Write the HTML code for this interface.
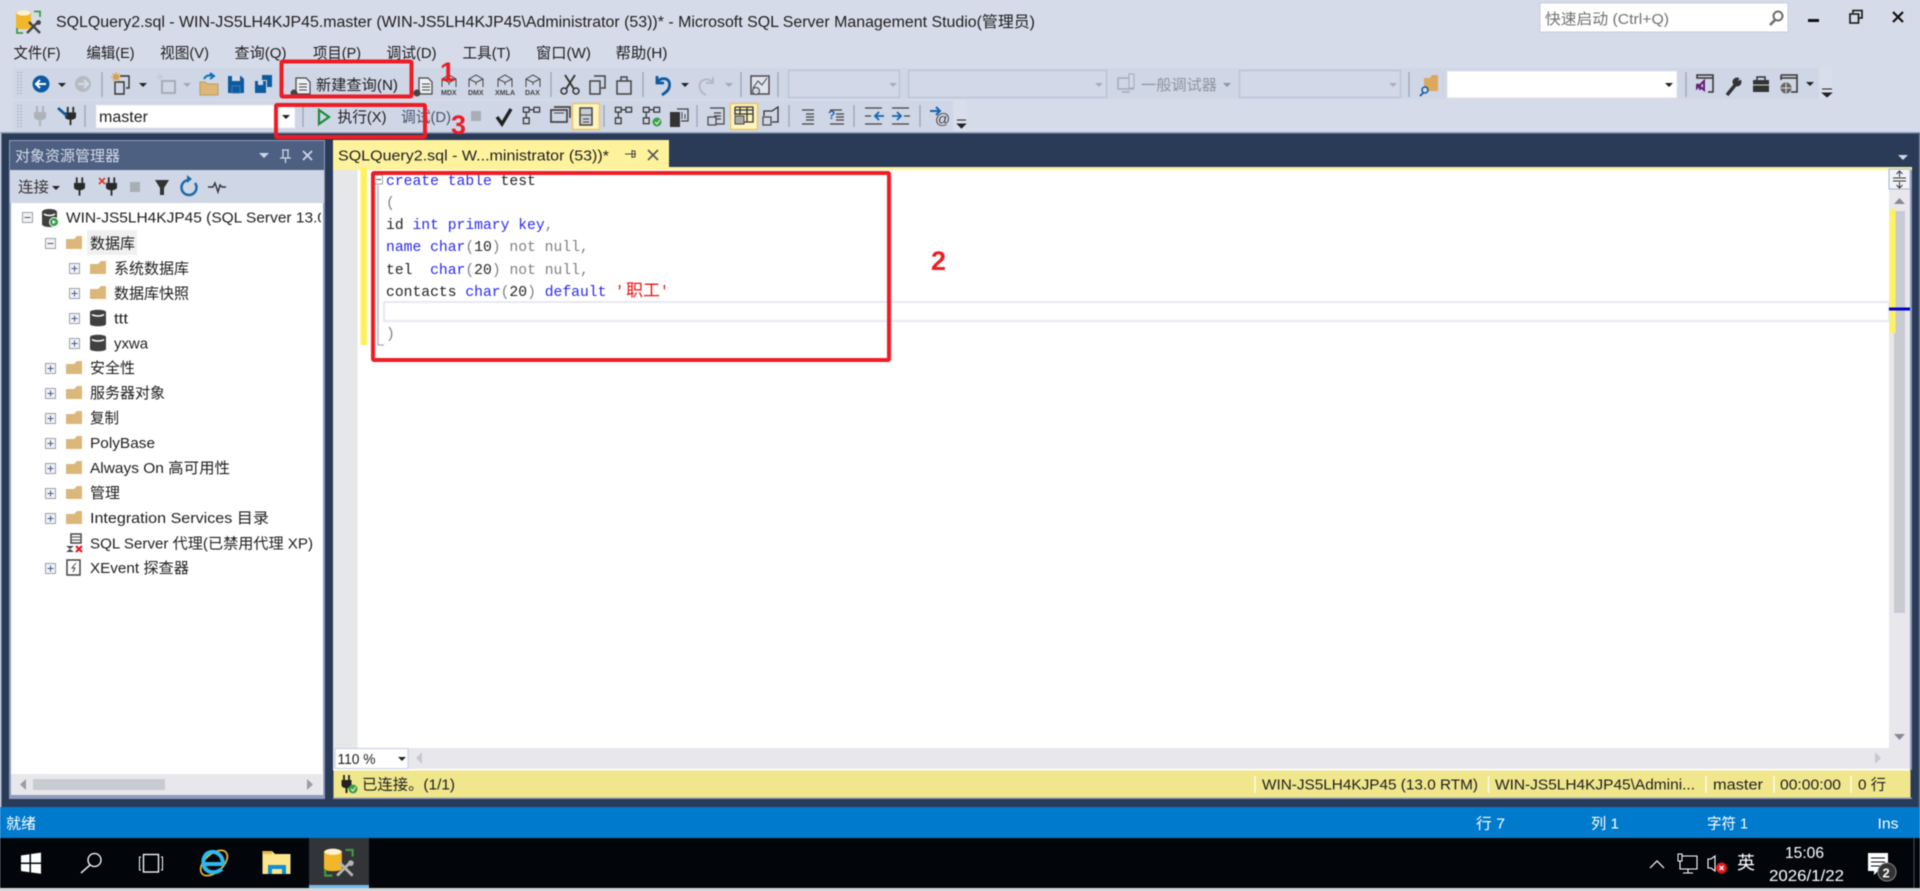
<!DOCTYPE html>
<html><head><meta charset="utf-8"><title>SSMS</title>
<style>
html,body{margin:0;padding:0;width:1920px;height:891px;overflow:hidden;background:#d6dbe9}
svg{display:block;filter:blur(.4px)}
text{font-family:"Liberation Sans","Noto Sans CJK SC",sans-serif;font-size:15px;fill:#1e1e1e;white-space:pre}
.m{font-family:"Liberation Mono","Noto Sans CJK SC",monospace;font-size:14.7px}
.w{fill:#fff}.t{font-size:7px;font-weight:bold;fill:#444}
.n{font-weight:bold;font-size:27px;fill:#ee1c25}
.b{fill:#2a2af0}.g{fill:#808080}.k{fill:#222}
</style></head><body>
<svg xmlns="http://www.w3.org/2000/svg" width="1920" height="891" viewBox="0 0 1920 891">
<defs>
<clipPath id="srv"><rect x="60" y="205" width="261" height="30"/></clipPath>
<symbol id="fo" viewBox="0 0 16 13"><path d="M0 3H8L11 0H16V13H0Z" fill="#dcb77a"/></symbol>
<symbol id="pl" viewBox="0 0 11 11"><rect x=".5" y=".5" width="10" height="10" fill="#f2f2f4" stroke="#9ba0ac"/><path d="M2.5 5.5H8.500M5.500 2.500V8.500" stroke="#3d5a94" stroke-width="1"/></symbol>
<symbol id="mi" viewBox="0 0 11 11"><rect x=".5" y=".5" width="10" height="10" fill="#f2f2f4" stroke="#9ba0ac"/><path d="M2.500 5.500H8.500" stroke="#555" stroke-width="1"/></symbol>
<symbol id="db" viewBox="0 0 16 18"><path d="M0 3C0 0 16 0 16 3V15C16 18 0 18 0 15Z" fill="#404040"/><path d="M2 5.500C5 7.500 11 7.500 14 5.500" stroke="#fff" stroke-width="1.600" fill="none"/></symbol>
<symbol id="ssms" viewBox="0 0 26 24"><path d="M0 3C0 0 15 0 15 3V17C15 20 0 20 0 17Z" fill="#f2b62b"/><ellipse cx="7.500" cy="3" rx="7" ry="2.600" fill="#fdf3cf"/><path d="M18 1.500H24V7M1 18V23H7" stroke="#3e9a46" stroke-width="1.800" fill="none"/><path d="M11 23L22 12M13 12L24 23" stroke="currentColor" stroke-width="2.400" fill="none"/><circle cx="22.500" cy="12.500" r="2.400" fill="currentColor"/></symbol>
<symbol id="cube" viewBox="0 0 18 14"><path d="M2 13V5L9 1L16 5V13M2 5L9 8.500L16 5M9 8.500V11" stroke="#444" fill="none"/></symbol>
<symbol id="plug" viewBox="0 0 12 20"><path d="M3 0V6M9 0V6" stroke="currentColor" stroke-width="2"/><path d="M0 6H12V11C12 13 9 14 7 14V20H5V14C3 14 0 13 0 11Z" fill="currentColor"/></symbol>
<symbol id="tree" viewBox="0 0 20 20"><path d="M1.500 1.500h6v5h-6zM12.500 1.500h6v5h-6zM1.500 12.500h6v6h-6zM4.500 6.500v6M7.500 4H12.500" stroke="#333" stroke-width="1.300" fill="none"/></symbol>
</defs>

<!-- window -->
<rect width="1920" height="891" fill="#d6dbe9"/>
<use href="#ssms" x="16" y="10" width="26" height="24" color="#444"/>
<text x="56" y="27" style="font-size:15.500px" textLength="979" lengthAdjust="spacingAndGlyphs">SQLQuery2.sql - WIN-JS5LH4KJP45.master (WIN-JS5LH4KJP45\Administrator (53))* - Microsoft SQL Server Management Studio(管理员)</text>
<rect x="1540" y="3" width="248" height="29" fill="#fff" stroke="#c6cbdc"/>
<text x="1545" y="24" style="fill:#717171" textLength="124" lengthAdjust="spacingAndGlyphs">快速启动 (Ctrl+Q)</text>
<circle cx="1778" cy="16" r="4.500" fill="none" stroke="#6d6d6d" stroke-width="2"/><path d="M1775 20L1770 25" stroke="#6d6d6d" stroke-width="2.500"/>
<path d="M1808 20.500H1819" stroke="#111" stroke-width="3"/>
<path d="M1853 13V10.500H1862V18H1859M1850 14H1858.500V23H1850Z" stroke="#111" stroke-width="1.600" fill="none"/>
<path d="M1893 12L1903 22M1903 12L1893 22" stroke="#111" stroke-width="2.200"/>

<!-- menu -->
<g>
<text x="13.500" y="58" textLength="47" lengthAdjust="spacingAndGlyphs">文件(F)</text>
<text x="86.500" y="58" textLength="48" lengthAdjust="spacingAndGlyphs">编辑(E)</text>
<text x="160" y="58" textLength="49" lengthAdjust="spacingAndGlyphs">视图(V)</text>
<text x="234.500" y="58" textLength="52" lengthAdjust="spacingAndGlyphs">查询(Q)</text>
<text x="313" y="58" textLength="48" lengthAdjust="spacingAndGlyphs">项目(P)</text>
<text x="386.500" y="58" textLength="50" lengthAdjust="spacingAndGlyphs">调试(D)</text>
<text x="462.500" y="58" textLength="48" lengthAdjust="spacingAndGlyphs">工具(T)</text>
<text x="536" y="58" textLength="55" lengthAdjust="spacingAndGlyphs">窗口(W)</text>
<text x="615.500" y="58" textLength="52" lengthAdjust="spacingAndGlyphs">帮助(H)</text>
</g>

<!-- toolbars bg -->
<rect x="13" y="68" width="1806" height="31" fill="#cfd6e5"/>
<rect x="1819" y="68" width="13" height="31" fill="#d9deeb"/>
<rect x="13" y="101" width="940" height="30" fill="#cfd6e5"/>
<rect x="953" y="101" width="13" height="30" fill="#d9deeb"/>
<path d="M18 72V96M21 72V96M18 105V127M21 105V127" stroke="#8b95a9" stroke-dasharray="1 2"/>

<!-- toolbar 1 -->
<circle cx="41" cy="84" r="8.500" fill="#0e5a9e"/><path d="M46 84H37M40 80L36 84L40 88" stroke="#fff" stroke-width="2" fill="none"/>
<path d="M58 83H66L62 87Z" fill="#222"/>
<circle cx="83" cy="84" r="8" fill="#b6bac2"/><path d="M78 84H87M84 80L88 84L84 88" stroke="#d6dbe9" stroke-width="2" fill="none"/>
<path d="M102 72V97M643 72V97M741 72V97M778 72V97M551 72V97M1409 72V97M1686 72V97M85 105V127M303 105V127M604 105V127M697 105V127M789 105V127M854 105V127M920 105V127" stroke="#98a2b6" stroke-width="1.200"/>
<path d="M120 76H129V88H126M115 82H124V94H115Z" fill="none" stroke="#333" stroke-width="1.400"/><circle cx="116" cy="77" r="3" fill="#d9a04a"/><path d="M116 72V82M111 77H121M112.500 73.500L119.500 80.500M119.500 73.500L112.500 80.500" stroke="#d9a04a"/>
<path d="M139 83H147L143 87Z" fill="#222"/>
<path d="M162 81H175V93H162Z" fill="none" stroke="#a3a8b3" stroke-width="1.800"/><circle cx="160" cy="77" r="2.500" fill="#c9ccd2"/><path d="M160 73V81M156 77H164" stroke="#c9ccd2"/>
<path d="M183 83H191L187 87Z" fill="#a3a8b3"/>
<path d="M200 82H205L207 84H218V95H200Z" fill="#dcb77a" stroke="#c49a58"/><path d="M204 79C206 75 210 75 212 76M210 73L214 76L210 79" stroke="#0e70b8" stroke-width="2" fill="none"/>
<path d="M228 76H241L244 79V93H228Z" fill="#0e5a9e"/><rect x="232" y="76" width="8" height="5" fill="#d6dbe9"/><rect x="232" y="86" width="8" height="7" fill="#0e5a9e" stroke="#3d7cb7"/>
<path d="M255 81H266V93H255Z" fill="#0e5a9e"/><path d="M262 75H272V87H267V80H262Z" fill="#0e5a9e"/><rect x="258" y="81" width="5" height="4" fill="#d6dbe9"/>
<path d="M296 78H306L310 82V94H296Z" fill="#eef0f5" stroke="#444" stroke-width="1.200"/><path d="M299 84H307M299 87H307M299 90H307" stroke="#444"/><circle cx="294" cy="93" r="3.500" fill="#444"/>
<text x="316" y="90" textLength="82" lengthAdjust="spacingAndGlyphs">新建查询(N)</text>
<path d="M419 78H428L432 82V94H419Z" fill="#eef0f5" stroke="#444" stroke-width="1.200"/><path d="M422 84H430M422 87H430M422 90H430" stroke="#444"/><circle cx="417" cy="93" r="3.500" fill="#444"/>
<use href="#cube" x="440" y="74" width="18" height="14"/><text class="t" x="441" y="95">MDX</text>
<use href="#cube" x="467" y="74" width="18" height="14"/><text class="t" x="468" y="95">DMX</text>
<use href="#cube" x="496" y="74" width="18" height="14"/><text class="t" x="495" y="95" textLength="20">XMLA</text>
<use href="#cube" x="524" y="74" width="18" height="14"/><text class="t" x="525" y="95">DAX</text>
<path d="M565 75L574 89M575 75L566 89" stroke="#333" stroke-width="1.800"/><circle cx="564" cy="91" r="3" fill="none" stroke="#333" stroke-width="1.500"/><circle cx="576" cy="91" r="3" fill="none" stroke="#333" stroke-width="1.500"/>
<path d="M594 76H605V88H601M590 81H600V94H590Z" fill="none" stroke="#444" stroke-width="1.500"/>
<path d="M617 81H631V94H617ZM621 81V77H627V81" fill="none" stroke="#444" stroke-width="1.500"/>
<path d="M657 76V83H664M657 82C662 76 672 78 669 88C668 91 665 93 662 95" stroke="#0e5a9e" stroke-width="2.800" fill="none"/>
<path d="M681 83H689L685 87Z" fill="#222"/>
<path d="M713 77V83H706M713 83C708 76 697 80 700 89C701 92 704 94 706 95" stroke="#b4b8c2" stroke-width="2" fill="none"/>
<path d="M725 83H733L729 87Z" fill="#a3a8b3"/>
<rect x="751" y="76" width="18" height="18" fill="#dfe3ed" stroke="#444" stroke-width="1.400"/><path d="M753 88L758 81L762 85L767 78" stroke="#444" fill="none"/><circle cx="756" cy="91" r="3.500" fill="#cfd6e5" stroke="#444"/>
<rect x="788.500" y="70.500" width="111" height="27" fill="#d2d8e7" stroke="#bcc5d8" stroke-width="1.500"/><path d="M889 83H897L893 87Z" fill="#a9aeb8"/>
<rect x="908.500" y="70.500" width="198" height="27" fill="#d2d8e7" stroke="#bcc5d8" stroke-width="1.500"/><path d="M1095 83H1103L1099 87Z" fill="#a9aeb8"/>
<rect x="1118" y="78" width="15" height="11" fill="none" stroke="#a5abb7" stroke-width="1.500"/><rect x="1129" y="74" width="5" height="14" fill="#d2d8e7" stroke="#a5abb7"/><path d="M1122 92H1130" stroke="#a5abb7" stroke-width="1.500"/>
<text x="1141" y="90" style="fill:#8f959f" textLength="76" lengthAdjust="spacingAndGlyphs">一般调试器</text>
<path d="M1223 83H1231L1227 87Z" fill="#8f959f"/>
<rect x="1239.500" y="70.500" width="161" height="27" fill="#d2d8e7" stroke="#bcc5d8" stroke-width="1.500"/><path d="M1389 83H1397L1393 87Z" fill="#a9aeb8"/>
<path d="M1424 78H1430L1432 75H1438V91H1424Z" fill="#dea75e"/><circle cx="1425" cy="90" r="3" fill="#d6dbe9" stroke="#0e5a9e" stroke-width="1.500"/><path d="M1423 93L1420 96" stroke="#0e5a9e" stroke-width="1.800"/>
<rect x="1447" y="71" width="230" height="27" fill="#fff" stroke="#dfe3ee"/><path d="M1665 83H1673L1669 87Z" fill="#1e1e1e"/>
<path d="M1697 77V75H1713V92H1708M1697 75H1713V78H1697Z" fill="none" stroke="#333" stroke-width="1.500"/><path d="M1697 84L1704 90V81L1697 88V84M1700 84V90" stroke="#68217a" stroke-width="2" fill="none"/>
<path d="M1727 95L1736 84" stroke="#333" stroke-width="3.500"/><circle cx="1737" cy="82" r="4.500" fill="#333"/><path d="M1738 81L1741 75L1744 78Z" fill="#cfd6e5"/>
<path d="M1753 80H1769V92H1753Z" fill="#333"/><path d="M1757 80V77H1765V80" fill="none" stroke="#333" stroke-width="1.500"/><path d="M1753 85H1769" stroke="#cfd6e5"/>
<path d="M1781 75H1797V92H1791M1781 75V80M1781 78H1797" fill="none" stroke="#333" stroke-width="1.500"/><circle cx="1786" cy="88" r="5.500" fill="#666"/><path d="M1781 88H1791M1786 83V93" stroke="#ddd"/>
<path d="M1806 82H1814L1810 86Z" fill="#222"/>
<path d="M1822 89H1832M1822.500 93H1831.500L1827 97Z" stroke="#222" fill="#222"/>

<!-- toolbar 2 -->
<use href="#plug" x="34" y="106" width="12" height="20" color="#aeb2bb"/>
<use href="#plug" x="65" y="106" width="11" height="20" color="#2a2a2a"/>
<path d="M58 108L67 116" stroke="#0e5a9e" stroke-width="2.600"/>
<rect x="96" y="105" width="199" height="23" fill="#fff" stroke="#e2e5ef"/>
<text x="99" y="122" textLength="49" lengthAdjust="spacingAndGlyphs" style="font-size:15.500px">master</text>
<path d="M282 115H290L286 119Z" fill="#1e1e1e"/>
<path d="M319 110L329 117L319 124Z" fill="none" stroke="#1e8a3c" stroke-width="2.200"/>
<text x="337.500" y="122" textLength="49" lengthAdjust="spacingAndGlyphs">执行(X)</text>
<text x="401" y="122" style="fill:#4a5670" textLength="50" lengthAdjust="spacingAndGlyphs">调试(D)</text>
<rect x="471" y="111" width="10" height="10" fill="#a9adb7"/>
<path d="M497 117L502 124L511 109" stroke="#222" stroke-width="3.400" fill="none"/>
<use href="#tree" x="522" y="106" width="19" height="19"/>
<path d="M551 110H567V122H551ZM554 107H570V118" fill="none" stroke="#444" stroke-width="1.700"/><path d="M554 113H564" stroke="#444"/>
<rect x="572.500" y="103.500" width="27" height="26" fill="#fdf4bf" stroke="#e9c66e" stroke-width="1.500"/>
<path d="M580 108H592V125H580Z" fill="#c8ccd5" stroke="#444" stroke-width="1.500"/><path d="M580 115H592M583 119H589M583 122H589" stroke="#444"/>
<use href="#tree" x="614" y="106" width="19" height="19"/>
<use href="#tree" x="642" y="106" width="19" height="19"/><circle cx="657" cy="122" r="4.500" fill="#3aa047"/><path d="M655 122L657 124L660 120" stroke="#fff" fill="none"/>
<rect x="670" y="112" width="10" height="15" fill="#333"/><path d="M677 109H688V121H681" fill="none" stroke="#444" stroke-width="1.300"/><path d="M682 112V119M685 114V119" stroke="#444"/>
<path d="M710 108H724V124H716M714 113H721M714 116H721M714 119H721" fill="none" stroke="#444" stroke-width="1.200"/><rect x="708" y="117" width="8" height="8" fill="#cfd6e5" stroke="#444" stroke-width="1.200"/>
<rect x="730.500" y="103.500" width="27" height="26" fill="#fdf4bf" stroke="#e9c66e" stroke-width="1.500"/>
<path d="M735 107H753V122H744M735 107V115M735 110H753M735 114H753M740 107V115M747 107V122" fill="none" stroke="#333" stroke-width="1.300"/><rect x="735" y="116" width="9" height="8" fill="#aaa" stroke="#444"/>
<path d="M764 116V111H772L778 107V122H772" fill="none" stroke="#333" stroke-width="1.300"/><rect x="763" y="117" width="8" height="8" fill="#cfd6e5" stroke="#444" stroke-width="1.200"/>
<path d="M802 110H814M806 114H814M806 117H814M806 120H814M802 124H814" stroke="#444" stroke-width="1.300"/>
<path d="M830 110H842M836 114H844M836 117H844M836 120H844M830 124H844" stroke="#444" stroke-width="1.300"/><text x="828" y="119" style="font-size:12px;font-weight:bold;fill:#1665b0">?</text>
<path d="M865 108H882M865 124H882M865 116H871M875 116H884M879 112L875 116L879 120" stroke="#444" stroke-width="1.300" fill="none"/><path d="M875 116H884M879 112L875 116L879 120" stroke="#1665b0" stroke-width="1.800" fill="none"/>
<path d="M892 108H909M892 124H909M904 116H910" stroke="#444" stroke-width="1.300"/><path d="M892 116H901M897 112L901 116L897 120" stroke="#1665b0" stroke-width="1.800" fill="none"/>
<path d="M930 111H940M936 107L940 111L936 115" stroke="#1665b0" stroke-width="2" fill="none"/>
<text x="935" y="124" style="font-size:15px;fill:#444">@</text>
<path d="M957 120H966M957.500 124H965.500L961.500 128Z" stroke="#222" fill="#222"/>

<!-- dark background -->
<rect x="0" y="132" width="1920" height="675" fill="#2a3b58"/>
<rect x="0" y="132" width="1920" height="1.500" fill="#8b98b4"/>
<rect x="0" y="133" width="1.500" height="674" fill="#b3bbce"/>
<rect x="1918.500" y="133" width="1.500" height="674" fill="#4d5c78"/>

<!-- object explorer -->
<rect x="9" y="140" width="316" height="659" fill="#8e9bbc"/>
<rect x="10" y="141" width="314" height="29" fill="#4d6082"/>
<text x="15" y="161" style="fill:#d6dbe9" textLength="105" lengthAdjust="spacingAndGlyphs">对象资源管理器</text>
<path d="M259 153H269L264 158Z" fill="#cfd6e5"/>
<path d="M282 150H289M283 150V158H288V150M280 158H291M285.500 158V163" stroke="#cfd6e5" stroke-width="1.300" fill="none"/>
<path d="M303 151L312 160M312 151L303 160" stroke="#cfd6e5" stroke-width="1.800"/>
<rect x="10" y="170" width="314" height="33" fill="#cfd6e5"/>
<text x="18" y="192" style="fill:#333" textLength="31" lengthAdjust="spacingAndGlyphs">连接</text>
<path d="M52 186H60L56 190Z" fill="#222"/>
<use href="#plug" x="74" y="177" width="11" height="19" color="#2a2a2a"/>
<use href="#plug" x="106" y="177" width="11" height="19" color="#2a2a2a"/>
<path d="M99 178L105 184M105 178L99 184" stroke="#d8382c" stroke-width="1.600"/>
<rect x="130" y="182" width="10" height="10" fill="#a9adb7"/>
<path d="M155 180H169L164 188V195L160 195V188Z" fill="#333"/>
<path d="M195 183A7.500 7.500 0 1 1 189 180" stroke="#1b6aaa" stroke-width="2.500" fill="none"/><path d="M187 175V183L192 179Z" fill="#1b6aaa"/>
<path d="M208 187H213L215 183L218 192L220 185L222 187H226" stroke="#333" stroke-width="1.400" fill="none"/>
<rect x="11" y="203" width="312" height="592" fill="#fff"/>

<!-- tree -->
<rect x="87" y="230" width="50" height="25" fill="#f0f0f0"/>
<use href="#mi" x="22" y="212" width="11" height="11"/>
<path d="M42 212C42 208 57 208 57 212V224C57 228 42 228 42 224Z" fill="#404040"/><path d="M44 214C47 216 52 216 55 214" stroke="#fff" stroke-width="1.500" fill="none"/>
<circle cx="54" cy="222" r="4.500" fill="#2f9e44" stroke="#fff"/><path d="M52.500 220V224L56 222Z" fill="#fff"/>
<text x="66" y="222.500" textLength="260" lengthAdjust="spacingAndGlyphs" clip-path="url(#srv)">WIN-JS5LH4KJP45 (SQL Server 13.0</text>
<use href="#mi" x="45" y="238" width="11" height="11"/><use href="#fo" x="66" y="236" width="16" height="13"/><text x="90" y="248.500" textLength="45" lengthAdjust="spacingAndGlyphs">数据库</text>
<use href="#pl" x="69" y="263" width="11" height="11"/><use href="#fo" x="90" y="261" width="16" height="13"/><text x="114" y="273.500" textLength="75" lengthAdjust="spacingAndGlyphs">系统数据库</text>
<use href="#pl" x="69" y="288" width="11" height="11"/><use href="#fo" x="90" y="286" width="16" height="13"/><text x="114" y="298.500" textLength="75" lengthAdjust="spacingAndGlyphs">数据库快照</text>
<use href="#pl" x="69" y="313" width="11" height="11"/><use href="#db" x="90" y="309" width="16" height="18"/><text x="114" y="323.500" textLength="14" lengthAdjust="spacingAndGlyphs">ttt</text>
<use href="#pl" x="69" y="338" width="11" height="11"/><use href="#db" x="90" y="334" width="16" height="18"/><text x="114" y="348.500" textLength="34" lengthAdjust="spacingAndGlyphs">yxwa</text>
<use href="#pl" x="45" y="363" width="11" height="11"/><use href="#fo" x="66" y="361" width="16" height="13"/><text x="90" y="373" textLength="45" lengthAdjust="spacingAndGlyphs">安全性</text>
<use href="#pl" x="45" y="388" width="11" height="11"/><use href="#fo" x="66" y="386" width="16" height="13"/><text x="90" y="398" textLength="75" lengthAdjust="spacingAndGlyphs">服务器对象</text>
<use href="#pl" x="45" y="413" width="11" height="11"/><use href="#fo" x="66" y="411" width="16" height="13"/><text x="90" y="423" textLength="29" lengthAdjust="spacingAndGlyphs">复制</text>
<use href="#pl" x="45" y="438" width="11" height="11"/><use href="#fo" x="66" y="436" width="16" height="13"/><text x="90" y="448" textLength="65" lengthAdjust="spacingAndGlyphs">PolyBase</text>
<use href="#pl" x="45" y="463" width="11" height="11"/><use href="#fo" x="66" y="461" width="16" height="13"/><text x="90" y="473" textLength="140" lengthAdjust="spacingAndGlyphs">Always On 高可用性</text>
<use href="#pl" x="45" y="488" width="11" height="11"/><use href="#fo" x="66" y="486" width="16" height="13"/><text x="90" y="498" textLength="30" lengthAdjust="spacingAndGlyphs">管理</text>
<use href="#pl" x="45" y="513" width="11" height="11"/><use href="#fo" x="66" y="511" width="16" height="13"/><text x="90" y="523" textLength="179" lengthAdjust="spacingAndGlyphs">Integration Services 目录</text>
<rect x="71" y="534" width="10" height="9" fill="#fff" stroke="#444" stroke-width="1.500"/><path d="M72 537H80M72 540H80" stroke="#444"/><path d="M66 546H74L66 552H74Z" fill="#444"/><path d="M76 546L82 552M82 546L76 552" stroke="#e31c23" stroke-width="2.200"/>
<text x="90" y="548.500" textLength="223" lengthAdjust="spacingAndGlyphs">SQL Server 代理(已禁用代理 XP)</text>
<use href="#pl" x="45" y="563" width="11" height="11"/><rect x="67" y="560" width="13" height="15" fill="#fff" stroke="#444" stroke-width="1.500"/><path d="M76 563L72 568H75L73 572" stroke="#444" fill="none"/>
<text x="90" y="573" textLength="99" lengthAdjust="spacingAndGlyphs">XEvent 探查器</text>
<!-- explorer hscroll -->
<rect x="11" y="774" width="311" height="21" fill="#e8e8ec"/>
<rect x="33" y="779" width="132" height="11" fill="#c9cbd2"/>
<path d="M26 779V790L20 784.500Z" fill="#9a9ca6"/><path d="M307 779V790L313 784.500Z" fill="#9a9ca6"/>

<!-- document -->
<rect x="333" y="170" width="1579" height="600" fill="#fff"/>
<rect x="1910" y="168" width="2" height="602" fill="#8e9bbc"/>
<path d="M333 140H669V167H1912V170H333Z" fill="#fff29d"/>
<text x="338" y="160.500" textLength="271" lengthAdjust="spacingAndGlyphs">SQLQuery2.sql - W...ministrator (53))*</text>
<path d="M625 154H632M632 150V158M632 154H636M632 151H635V157H632" stroke="#444" fill="none"/>
<path d="M648 150L658 160M658 150L648 160" stroke="#555" stroke-width="1.600"/>
<path d="M1898 155H1908L1903 160Z" fill="#cfd6e5"/>
<rect x="333" y="170" width="24.500" height="578" fill="#e6e7e8"/>
<rect x="360.500" y="168" width="6.500" height="177" fill="#fff15c"/>
<rect x="384" y="302" width="1505" height="19" fill="#fff" stroke="#e8e8f2" stroke-width="2"/>
<rect x="374.500" y="175" width="8" height="9" fill="#fff" stroke="#a5a5a5"/><path d="M376 179.500H381" stroke="#555"/>
<path d="M378 185V345H384" stroke="#a9a9a9" stroke-width="1.200" fill="none"/>
<!-- code -->
<text class="m b" x="386" y="185">create table <tspan class="k">test</tspan></text>
<text class="m g" x="386" y="207">(</text>
<text class="m b" x="386" y="229"><tspan class="k">id</tspan> int primary key<tspan class="g">,</tspan></text>
<text class="m b" x="386" y="251">name char<tspan class="g">(</tspan><tspan class="k">10</tspan><tspan class="g">) not null,</tspan></text>
<text class="m b" x="386" y="274"><tspan class="k">tel</tspan>  char<tspan class="g">(</tspan><tspan class="k">20</tspan><tspan class="g">) not null,</tspan></text>
<text class="m b" x="386" y="296"><tspan class="k">contacts</tspan> char<tspan class="g">(</tspan><tspan class="k">20</tspan><tspan class="g">)</tspan> default <tspan style="fill:#f01010">'</tspan><tspan x="626" style="fill:#f01010;font-size:17px">职工</tspan><tspan x="660" style="fill:#f01010">'</tspan></text>
<text class="m g" x="386" y="338">)</text>

<!-- vscroll -->
<rect x="1889" y="189" width="21" height="559" fill="#e8e8ec"/>
<rect x="1889" y="169" width="21" height="20" fill="#f0f2f8" stroke="#a8b2cc"/>
<path d="M1893 178H1906M1893 181H1906M1899.500 171V177M1899.500 182V188M1896.500 174L1899.500 171L1902.500 174M1896.500 185L1899.500 188L1902.500 185" stroke="#333" fill="none"/>
<path d="M1894 204L1899.500 198L1905 204Z" fill="#868999"/>
<rect x="1894" y="211" width="11" height="402" fill="#c9cbd2"/>
<rect x="1890" y="209" width="5.500" height="124" fill="#fff15c"/>
<rect x="1889" y="307.500" width="21" height="3" fill="#0000d0"/>
<path d="M1894 734L1899.500 740L1905 734Z" fill="#868999"/>

<!-- hscroll + zoom -->
<rect x="333" y="748" width="1577" height="21" fill="#e8e8ec"/>
<rect x="335" y="748.500" width="73" height="20" fill="#fff" stroke="#c5cde0"/>
<text x="337.500" y="764" style="font-size:14.500px" textLength="38" lengthAdjust="spacingAndGlyphs">110 %</text>
<path d="M398 757H406L402 761Z" fill="#222"/>
<path d="M422 752V764L416 758Z" fill="#c7c9d1"/><path d="M1875 752V764L1881 758Z" fill="#c7c9d1"/>

<!-- query status -->
<rect x="333" y="769" width="1577" height="1.500" fill="#fff"/>
<rect x="333.500" y="770.500" width="1577" height="28" fill="#f0e68c"/>
<rect x="333" y="797.500" width="1579" height="1.500" fill="#8e9bbc"/>
<path d="M344 775V780M349 775V780" stroke="#222" stroke-width="1.800"/><path d="M341.500 780H351.500V785C351.500 787 349 788 347.500 788V793H345.500V788C344 788 341.500 787 341.500 785Z" fill="#222"/>
<circle cx="353" cy="789" r="4.500" fill="#3aa047"/><path d="M351 789L353 791L355.500 787" stroke="#fff" fill="none"/>
<text x="362" y="789.500" textLength="93" lengthAdjust="spacingAndGlyphs">已连接。(1/1)</text>
<path d="M1255 776V793M1488.500 776V793M1706 776V793M1774 776V793M1851 776V793" stroke="#fff" stroke-width="1.500" opacity=".85"/>
<text x="1262" y="789.500" textLength="216" lengthAdjust="spacingAndGlyphs">WIN-JS5LH4KJP45 (13.0 RTM)</text>
<text x="1495" y="789.500" textLength="200" lengthAdjust="spacingAndGlyphs">WIN-JS5LH4KJP45\Admini...</text>
<text x="1713" y="789.500" textLength="50" lengthAdjust="spacingAndGlyphs">master</text>
<text x="1780" y="789.500" textLength="61" lengthAdjust="spacingAndGlyphs">00:00:00</text>
<text x="1858" y="789.500" textLength="28" lengthAdjust="spacingAndGlyphs">0 行</text>

<!-- status bar -->
<rect x="0" y="807" width="1920" height="31" fill="#007acc"/>
<text class="w" x="6" y="828.500" textLength="30" lengthAdjust="spacingAndGlyphs">就绪</text>
<text class="w" x="1476" y="828.500" textLength="29" lengthAdjust="spacingAndGlyphs">行 7</text>
<text class="w" x="1591" y="828.500" textLength="28" lengthAdjust="spacingAndGlyphs">列 1</text>
<text class="w" x="1707" y="828.500" textLength="41" lengthAdjust="spacingAndGlyphs">字符 1</text>
<text class="w" x="1877.500" y="828.500" textLength="21" lengthAdjust="spacingAndGlyphs">Ins</text>

<!-- taskbar -->
<rect x="0" y="838" width="1920" height="50" fill="#02060b"/>
<rect x="0" y="888" width="1920" height="3" fill="#d5d5d5"/>
<path d="M21 855.500L29.500 854.200V862.500H21ZM31 854L41 852.600V862.500H31ZM21 864H29.500V872.300L21 871ZM31 864H41V873.800L31 872.400Z" fill="#fff"/>
<circle cx="94.500" cy="860" r="6.500" fill="none" stroke="#fff" stroke-width="1.300"/><path d="M90 865L81 873" stroke="#fff" stroke-width="1.500"/>
<rect x="143.500" y="854.500" width="15" height="17.500" fill="none" stroke="#fff" stroke-width="1.300"/><path d="M141 857H139.500V870H141M161 857H162.500V870H161" stroke="#fff" fill="none"/>
<ellipse cx="214" cy="863" rx="9" ry="16" transform="rotate(48 214 863)" fill="none" stroke="#e6b32c" stroke-width="1.800"/>
<path d="M205 864H223C223 855 216 851 211 852C205 853 202 859 204 866C206 872 214 875 222 869" fill="none" stroke="#2fb8ec" stroke-width="4"/>
<path d="M262.500 851H272L275 854H290.500V874H262.500Z" fill="#fde58c"/><rect x="263" y="851" width="9" height="3" fill="#e6b838"/>
<path d="M268 874V865H286V874H282V869H272V874Z" fill="#0d8fd6"/>
<rect x="309" y="838" width="60" height="47" fill="#333437"/>
<rect x="309" y="885" width="60" height="3" fill="#76b9ed"/>
<use href="#ssms" x="324" y="848" width="31" height="29" color="#b5b5b5"/>
<path d="M1650 868L1657 861L1664 868" fill="none" stroke="#fff" stroke-width="1.200"/>
<path d="M1680 856H1697V869H1680ZM1688 869V873M1683 873H1693" fill="none" stroke="#fff" stroke-width="1.100"/><rect x="1678" y="854" width="4" height="7" fill="#02060b" stroke="#fff"/>
<path d="M1708 859H1711L1715 856V871L1711 868H1708Z" fill="none" stroke="#fff" stroke-width="1.100"/>
<circle cx="1721.500" cy="868" r="5.500" fill="#e11b22"/><path d="M1719.500 866L1723.500 870M1723.500 866L1719.500 870" stroke="#fff" stroke-width="1.300"/>
<text class="w" x="1737" y="869" style="font-size:18px">英</text>
<text class="w" x="1785" y="858" style="font-size:15.500px" textLength="39" lengthAdjust="spacingAndGlyphs">15:06</text>
<text class="w" x="1769" y="881" style="font-size:15.500px" textLength="75" lengthAdjust="spacingAndGlyphs">2026/1/22</text>
<path d="M1868 853H1888V871H1878L1874 875V871H1868Z" fill="#fff"/><path d="M1871 858H1885M1871 862H1885M1871 866H1881" stroke="#02060b"/>
<circle cx="1887" cy="872" r="9" fill="#333" stroke="#888"/>
<text class="w" x="1882.500" y="877.500" style="font-size:13px;font-weight:bold">2</text>
<path d="M1914 838V888" stroke="#4a4d52"/>

<!-- annotations -->
<rect x="281.500" y="61.500" width="130" height="35" fill="none" stroke="#ee1c25" stroke-width="4" rx="1"/>
<rect x="276" y="105" width="149" height="32" fill="none" stroke="#ee1c25" stroke-width="4" rx="1"/>
<rect x="373" y="173" width="516" height="187" fill="none" stroke="#ee1c25" stroke-width="4" rx="1"/>
<text class="n" x="440" y="81">1</text>
<text class="n" x="451" y="134">3</text>
<text class="n" x="931" y="270">2</text>
</svg>
</body></html>
